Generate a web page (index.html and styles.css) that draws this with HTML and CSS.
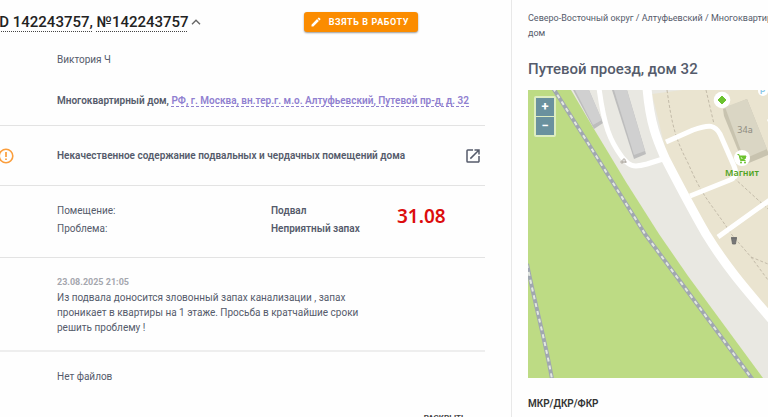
FILE: index.html
```html
<!DOCTYPE html>
<html lang="ru">
<head>
  <meta charset="UTF-8" />
  <meta name="viewport" content="width=device-width, initial-scale=1" />
  <title>142243757</title>
  <link rel="stylesheet" href="styles.css">
</head>
<body>
  <div class="page">
    <main class="ticket">
      <header class="ticket-header">
        <h1 class="ticket-title"><span class="dotted">ID 142243757,</span> <span class="dotted">№142243757</span></h1>
        <button class="icon-button" type="button" aria-label="Свернуть">
          <svg width="10" height="6" viewBox="0 0 10 6"><path d="M1 5.2 5 1.2 9 5.2" fill="none" stroke="#666" stroke-width="1.4"/></svg>
        </button>
        <button class="take-button" type="button">
          <svg width="12" height="12" viewBox="0 0 24 24"><path fill="#fff" d="M3 17.25V21h3.75L17.81 9.94l-3.75-3.75L3 17.25zM20.71 7.04a1 1 0 0 0 0-1.41l-2.34-2.34a1 1 0 0 0-1.41 0l-1.83 1.83 3.75 3.75 1.83-1.83z"/></svg>
          <span>Взять в работу</span>
        </button>
      </header>

      <section class="row author">
        <p>Виктория Ч</p>
        <p class="address">Многоквартирный дом, <a href="#map">РФ, г. Москва, вн.тер.г. м.о. Алтуфьевский, Путевой пр-д, д. 32</a></p>
      </section>

      <section class="row category">
        <svg class="alert-icon" width="16" height="16" viewBox="0 0 16 16">
          <circle cx="8" cy="8" r="6.8" fill="none" stroke="#fb9e3c" stroke-width="1.6"/>
          <path d="M8 4v5M8 10.4v1.6" stroke="#fb9e3c" stroke-width="1.7"/>
        </svg>
        <h2 class="category-name">Некачественное содержание подвальных и чердачных помещений дома</h2>
        <button class="icon-button" type="button" aria-label="Открыть">
          <svg width="18" height="18" viewBox="0 0 24 24"><path fill="#555b6b" d="M19 19H5V5h7V3H5a2 2 0 0 0-2 2v14a2 2 0 0 0 2 2h14c1.1 0 2-.9 2-2v-7h-2v7zM14 3v2h3.59l-9.83 9.83 1.41 1.41L19 6.41V10h2V3h-7z"/></svg>
        </button>
      </section>

      <section class="row details">
        <dl class="detail-list">
          <dt>Помещение:</dt><dd>Подвал</dd>
          <dt>Проблема:</dt><dd>Неприятный запах</dd>
        </dl>
        <strong class="deadline">31.08</strong>
      </section>

      <section class="row message">
        <time datetime="2025-08-23T21:05">23.08.2025 21:05</time>
        <p>Из подвала доносится зловонный запах канализации , запах проникает в квартиры на 1 этаже. Просьба в кратчайшие сроки решить проблему !</p>
      </section>

      <section class="files">
        <p>Нет файлов</p>
        <button class="expand-button" type="button">Раскрыть</button>
      </section>
    </main>

    <aside class="house">
      <nav class="crumbs">Северо-Восточный округ / Алтуфьевский / Многоквартирный<br>дом</nav>
      <h2 class="house-title">Путевой проезд, дом 32</h2>
      <div class="map" id="map">
        <svg class="map-canvas" viewBox="0 0 240 288" preserveAspectRatio="xMinYMin slice">
          <rect width="240" height="288" fill="#bddb84"/>
          <!-- streets and yards -->
          <path d="M43 0 66 39 98 92 131 144 160 186 235 288H240V0Z" fill="#e9e8e2"/>
          <path d="M124 4 162-1H240V221L214 190 180 142 158 102 139 66Z" fill="#eae4d0"/>
          <!-- buildings -->
          <path d="M45 0H61L75 33 66 39Z" fill="#bdbdbd"/>
          <path d="M47 0H61L74 30 65 35Z" fill="#d0d0d0"/>
          <path d="M84 0H99L118 64 106 69Z" fill="#bdbdbd"/>
          <path d="M86 0H99L117 61 106 65Z" fill="#d0d0d0"/>
          <path d="M195 19 219 9 240 62V65L216 75 196 26Z" fill="#c8c3af"/>
          <path d="M197 17 219 9 239 59 216 69Z" fill="#dad6c4"/>
          <!-- footpaths -->
          <g fill="none" stroke="#c3bba9" stroke-width="1" stroke-dasharray="3 2">
            <path d="M139 0C144 35 147 48 160 73C176 110 181 110 204 145L223 167L240 190"/>
            <path d="M178 0 186 34M206 88 240 119M223 167 240 174"/>
          </g>
          <!-- roads -->
          <g fill="none" stroke="#fff" stroke-linejoin="round">
            <path d="M119-2C122 35 130 52 137 68C151 95 163 118 178 144C197 175 215 196 244 230" stroke-width="9"/>
            <path d="M71-2C76 36 82 51 94 67C101 76 105 78 119 74L138 68" stroke-width="5"/>
            <path d="M138 52 165 40C182 34 187 35 192 44L206 76C209 84 209 87 202 90L162 106" stroke-width="5"/>
            <path d="M190 147 229 119 242 110M240 32 248 28" stroke-width="5"/>
          </g>
          <!-- railways -->
          <g fill="none">
            <path d="M25-2 60 53 117 144 160 202 225 290" stroke="#a0a7b0" stroke-width="4"/>
            <path d="M25-2 60 53 117 144 160 202 225 290" stroke="#e3e8e2" stroke-width="2" stroke-dasharray="4 4"/>
            <path d="M-1 174C7 214 17 250 24 289" stroke="#a0a7b0" stroke-width="4"/>
            <path d="M-1 174C7 214 17 250 24 289" stroke="#e3e8e2" stroke-width="2" stroke-dasharray="4 4"/>
          </g>
          <!-- places -->
          <circle cx="194" cy="10" r="8.3" fill="#fff"/>
          <path d="M194 6 198 10 194 14 190 10Z" fill="#6cc32f" stroke="#6cc32f" stroke-linejoin="round"/>
          <circle cx="214" cy="68" r="8" fill="#fff"/>
          <path d="M209.5 64.5H211L212.5 70.5H217.5M212 66H218L217 69H212.5Z" fill="#6cc32f" stroke="#6cc32f"/>
          <circle cx="213" cy="72.5" r="1" fill="#6cc32f"/><circle cx="217" cy="72.5" r="1" fill="#6cc32f"/>
          <circle cx="235" cy="1" r="5" fill="#fff"/>
          <text class="map-parking" x="232" y="4">P</text>
          <path d="M93 73V71H95V73ZM95 73V69H97V73M97 73V71H98V73" fill="none" stroke="#aaa39c" stroke-width=".8"/>
          <path d="M203.5 148H208.5L207.5 154H204.5ZM203 147.5H209" fill="#777" stroke="#666" stroke-width=".8"/>
          <text class="map-number" x="217" y="43">34а</text>
          <text class="map-place" x="214" y="86">Магнит</text>
        </svg>
        <div class="zoom">
          <button type="button" aria-label="Приблизить">+</button>
          <button type="button" aria-label="Отдалить">−</button>
        </div>
      </div>
      <h3 class="house-section">МКР/ДКР/ФКР</h3>
    </aside>
  </div>
</body>
</html>
```
FILE: styles.css
```css
* {
  box-sizing: border-box;
}

body {
  margin: 0;
  font-family: Roboto, "Liberation Sans", sans-serif;
  font-size: 10px;
  line-height: 15px;
  color: #555b6b;
  background: #fefefe;
}

h1, h2, h3, p, dl, dd {
  margin: 0;
}

button {
  font-family: inherit;
  border: 0;
  padding: 0;
  background: none;
  cursor: pointer;
}

.page {
  display: grid;
  grid-template-columns: 2fr 1fr;
  height: 100vh;
  overflow: hidden;
}

.ticket {
  padding-right: 26px;
  border-right: 1px solid #e8e8e8;
}

.ticket-header {
  display: flex;
  align-items: center;
  height: 44px;
  padding-right: 67px;
}

.ticket-title {
  margin-left: -5px;
  font-size: 15px;
  font-weight: 500;
  line-height: 16px;
  color: #222;
  white-space: nowrap;
}

.dotted {
  text-decoration: underline dotted #444 1px;
  text-underline-offset: 4px;
}

.icon-button {
  display: flex;
  margin-left: 2px;
}

.take-button {
  display: flex;
  align-items: center;
  gap: 7px;
  height: 20px;
  margin-left: auto;
  padding: 0 9px 0 6px;
  border-radius: 3px;
  background: #fb8c00;
  box-shadow: 0 1px 2px rgba(0, 0, 0, 0.4);
  color: #fff;
  font-size: 9px;
  font-weight: 700;
  letter-spacing: 0.6px;
  text-transform: uppercase;
}

.row {
  padding-left: 57px;
  border-bottom: 1px solid #e3e3e3;
}

.author {
  display: flex;
  flex-direction: column;
  gap: 26px;
  padding-top: 8px;
  padding-bottom: 17px;
}

.address {
  font-weight: 600;
  white-space: nowrap;
}

.address a {
  color: #9080d0;
  text-decoration: none;
  border-bottom: 1px dashed #9080d0;
}

.category {
  display: flex;
  align-items: center;
  height: 60px;
  padding-left: 0;
  padding-right: 3px;
}

.alert-icon {
  flex: none;
  margin-left: -2px;
}

.category-name {
  margin-left: 43px;
  margin-right: auto;
  font-size: 10px;
  font-weight: 600;
}

.details {
  display: flex;
  padding-top: 16px;
  padding-bottom: 19px;
}

.detail-list {
  display: grid;
  grid-template-columns: 214px 1fr;
  width: 302px;
  line-height: 18px;
}

.detail-list dd {
  font-weight: 600;
  white-space: nowrap;
}

.deadline {
  margin-left: 38px;
  font-family: "Noto Sans", sans-serif;
  font-size: 19px;
  font-weight: 600;
  line-height: 28px;
  color: #dc0d0d;
}

.message {
  padding-top: 17px;
  padding-bottom: 15px;
  border-bottom: 2px solid #eee;
}

.message time {
  display: block;
  font-size: 9px;
  font-weight: 700;
  color: #a5a7ae;
}

.message p {
  max-width: 306px;
}

.files {
  display: flex;
  flex-direction: column;
  gap: 26px;
  padding: 17px 19px 0 57px;
}

.expand-button {
  align-self: flex-end;
  font-size: 8px;
  line-height: 15px;
  font-weight: 700;
  color: #444;
  text-transform: uppercase;
}

.house {
  padding: 11px 0 0 16px;
  overflow: hidden;
}

.crumbs {
  font-size: 9px;
  white-space: nowrap;
}

.house-title {
  margin-top: 18px;
  font-size: 15px;
  line-height: 20px;
  font-weight: 500;
}

.map {
  position: relative;
  margin-top: 11px;
}

.map-canvas {
  display: block;
  width: 100%;
}

.map-number {
  font: 9px "Noto Sans", sans-serif;
  fill: #8f8c82;
  text-anchor: middle;
}

.map-place {
  font: 600 9px "Noto Sans", sans-serif;
  fill: #50a322;
  text-anchor: middle;
}

.map-parking {
  font: 700 8px Roboto, sans-serif;
  fill: #8bc9e8;
}

/* zoom control lies over the map */
.zoom {
  position: absolute;
  top: 6px;
  left: 6px;
  display: grid;
  gap: 1px;
  padding: 2px;
  border-radius: 2px;
  background: rgba(255, 255, 255, 0.5);
}

.zoom button {
  width: 18px;
  height: 18px;
  background: #6a919e;
  color: #fff;
  font-size: 13px;
  font-weight: 700;
  line-height: 18px;
}

.house-section {
  margin-top: 18px;
  font-size: 10px;
  font-weight: 600;
  color: #333;
}
```
